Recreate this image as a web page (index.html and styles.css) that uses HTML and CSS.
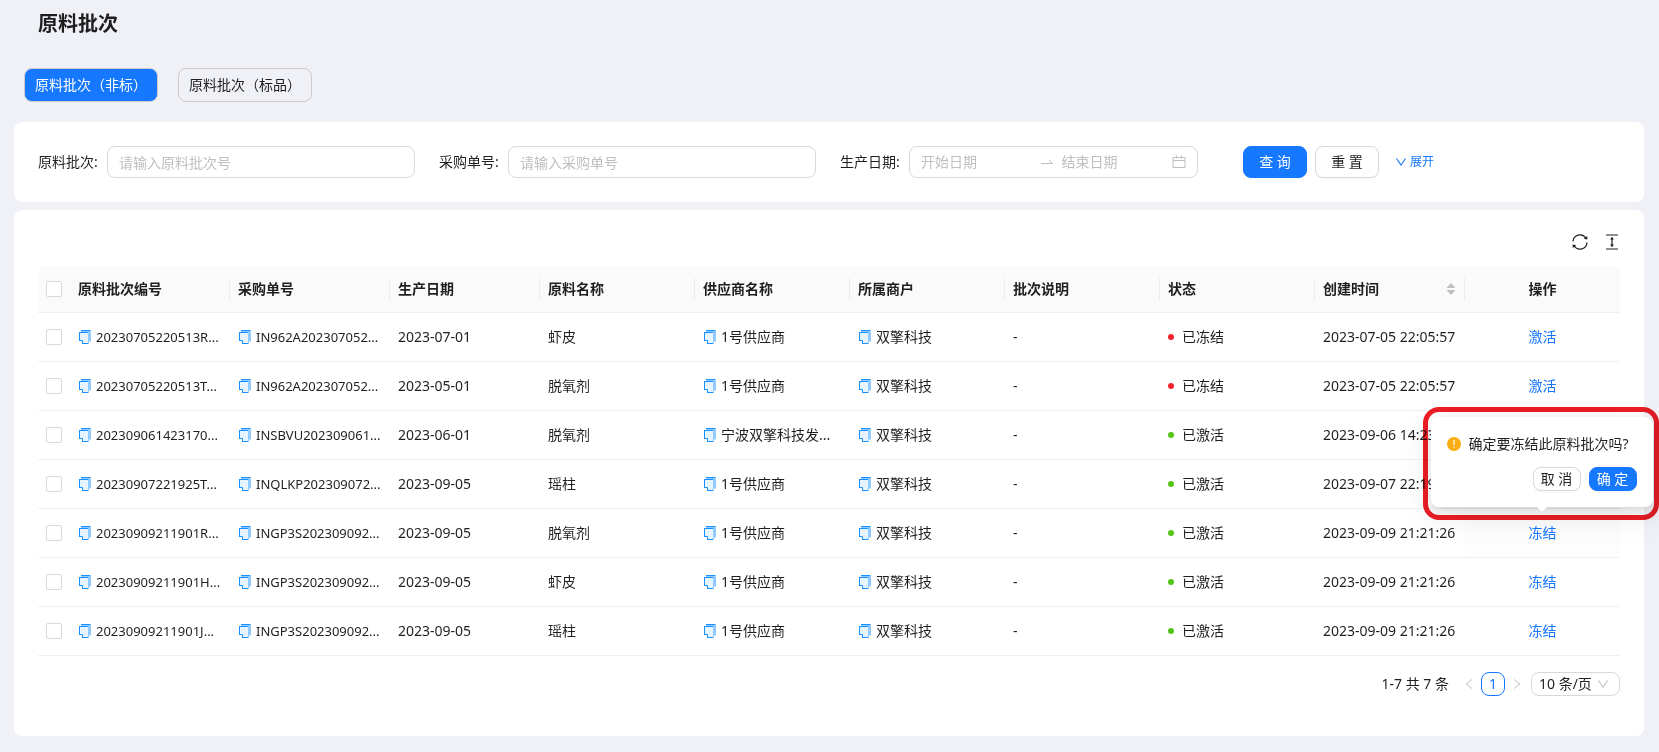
FILE: index.html
```html
<!DOCTYPE html>
<html lang="zh-CN">
<head>
<meta charset="utf-8">
<title>原料批次</title>
<link rel="stylesheet" href="styles.css">
</head>
<body>
<svg class="sprite" aria-hidden="true">
  <symbol id="copy" viewBox="0 0 12 14">
    <path fill="#91caff" d="M2 0h10v11.500h-2V13H8V3H2z"/>
    <path fill="#e6f4ff" d="M1 3h8v10H4L1 10z"/>
    <path fill="#91caff" d="M9 2h1v11H9z"/>
    <path fill="none" stroke="#1890ff" d="M2 .5h9M0 2.500h9M.5 2v9M1 10.500h2.500V13M3 13.500h6.500"/>
  </symbol>
  <symbol id="down" viewBox="0 0 12 12"><path fill="none" stroke="currentColor" stroke-width="1.100" d="M1.500 2.500 6 9l4.500-6.500"/></symbol>
</svg>
<main class="page">
  <h1 class="title">原料批次</h1>
  <nav class="tabs">
    <button class="tab tab-active" type="button">原料批次（非标）</button>
    <button class="tab" type="button">原料批次（标品）</button>
  </nav>

  <form class="card search">
    <div class="field">
      <label for="batch">原料批次:</label>
      <input class="control" id="batch" type="text" placeholder="请输入原料批次号">
    </div>
    <div class="field">
      <label for="order">采购单号:</label>
      <input class="control" id="order" type="text" placeholder="请输入采购单号">
    </div>
    <div class="field field-range">
      <label for="start">生产日期:</label>
      <div class="control range">
        <input id="start" type="text" placeholder="开始日期">
        <svg class="swap" viewBox="0 0 14 14" width="14" height="14"><path fill="none" stroke="currentColor" d="M1 8.500h11.500L9 5"/></svg>
        <input type="text" placeholder="结束日期" aria-label="结束日期">
        <svg viewBox="0 0 14 14" width="14" height="14"><path fill="none" stroke="currentColor" d="M1 2.500h12v10H1zM1 5.500h12M4.500.500v3M9.500.500v3"/></svg>
      </div>
    </div>
    <div class="actions">
      <button class="btn btn-primary" type="button">查 询</button>
      <button class="btn" type="button">重 置</button>
      <a class="expand" href="#"><svg width="12" height="12"><use href="#down"/></svg>展开</a>
    </div>
  </form>

  <section class="card list">
    <div class="toolbar">
      <button class="tool" type="button" aria-label="刷新">
        <svg viewBox="0 0 16 16" width="16" height="16"><path fill="none" stroke="currentColor" stroke-width="1.200" d="M1 7.500A7 7 0 0 1 13.800 4M15 8.500A7 7 0 0 1 2.200 12"/><path fill="currentColor" d="M15.300 2v3.600l-3.500-.9zM.7 14v-3.600l3.500.9z"/></svg>
      </button>
      <button class="tool" type="button" aria-label="密度">
        <svg viewBox="0 0 16 16" width="16" height="16"><path fill="none" stroke="currentColor" stroke-width="1.200" d="M2 1h12M2 15h12M8 4v8"/><path fill="currentColor" d="M8 2.800 9.800 5.500H6.200zM8 13.200 9.800 10.500H6.200z"/></svg>
      </button>
    </div>
    <table class="table">
      <colgroup>
        <col class="c-check"><col class="c-code"><col class="c-code"><col class="c-date"><col><col><col><col><col><col class="c-date"><col>
      </colgroup>
      <thead>
        <tr>
          <th><input type="checkbox" aria-label="全选"></th>
          <th><span class="head">原料批次编号</span></th>
          <th><span class="head">采购单号</span></th>
          <th><span class="head">生产日期</span></th>
          <th><span class="head">原料名称</span></th>
          <th><span class="head">供应商名称</span></th>
          <th><span class="head">所属商户</span></th>
          <th><span class="head">批次说明</span></th>
          <th><span class="head">状态</span></th>
          <th><span class="head">创建时间<svg viewBox="0 0 10 14" width="10" height="14"><path fill="#bfbfbf" d="M5 1l4.500 5h-9zM5 13l4.500-5h-9z"/></svg></span></th>
          <th class="op">操作</th>
        </tr>
      </thead>
      <tbody>
        <tr>
          <td><input type="checkbox" aria-label="选择"></td>
          <td><span class="copy code"><svg><use href="#copy"/></svg>20230705220513R...</span></td>
          <td><span class="copy code"><svg><use href="#copy"/></svg>IN962A202307052...</span></td>
          <td>2023-07-01</td><td>虾皮</td>
          <td><span class="copy"><svg><use href="#copy"/></svg>1号供应商</span></td>
          <td><span class="copy"><svg><use href="#copy"/></svg>双擎科技</span></td>
          <td>-</td><td><span class="status frozen">已冻结</span></td>
          <td>2023-07-05 22:05:57</td><td class="op"><a href="#">激活</a></td>
        </tr>
        <tr>
          <td><input type="checkbox" aria-label="选择"></td>
          <td><span class="copy code"><svg><use href="#copy"/></svg>20230705220513T...</span></td>
          <td><span class="copy code"><svg><use href="#copy"/></svg>IN962A202307052...</span></td>
          <td>2023-05-01</td><td>脱氧剂</td>
          <td><span class="copy"><svg><use href="#copy"/></svg>1号供应商</span></td>
          <td><span class="copy"><svg><use href="#copy"/></svg>双擎科技</span></td>
          <td>-</td><td><span class="status frozen">已冻结</span></td>
          <td>2023-07-05 22:05:57</td><td class="op"><a href="#">激活</a></td>
        </tr>
        <tr>
          <td><input type="checkbox" aria-label="选择"></td>
          <td><span class="copy code"><svg><use href="#copy"/></svg>202309061423170...</span></td>
          <td><span class="copy code"><svg><use href="#copy"/></svg>INSBVU202309061...</span></td>
          <td>2023-06-01</td><td>脱氧剂</td>
          <td><span class="copy"><svg><use href="#copy"/></svg>宁波双擎科技发...</span></td>
          <td><span class="copy"><svg><use href="#copy"/></svg>双擎科技</span></td>
          <td>-</td><td><span class="status">已激活</span></td>
          <td>2023-09-06 14:23</td><td class="op"></td>
        </tr>
        <tr>
          <td><input type="checkbox" aria-label="选择"></td>
          <td><span class="copy code"><svg><use href="#copy"/></svg>20230907221925T...</span></td>
          <td><span class="copy code"><svg><use href="#copy"/></svg>INQLKP202309072...</span></td>
          <td>2023-09-05</td><td>瑶柱</td>
          <td><span class="copy"><svg><use href="#copy"/></svg>1号供应商</span></td>
          <td><span class="copy"><svg><use href="#copy"/></svg>双擎科技</span></td>
          <td>-</td><td><span class="status">已激活</span></td>
          <td>2023-09-07 22:19</td><td class="op"></td>
        </tr>
        <tr>
          <td><input type="checkbox" aria-label="选择"></td>
          <td><span class="copy code"><svg><use href="#copy"/></svg>20230909211901R...</span></td>
          <td><span class="copy code"><svg><use href="#copy"/></svg>INGP3S202309092...</span></td>
          <td>2023-09-05</td><td>脱氧剂</td>
          <td><span class="copy"><svg><use href="#copy"/></svg>1号供应商</span></td>
          <td><span class="copy"><svg><use href="#copy"/></svg>双擎科技</span></td>
          <td>-</td><td><span class="status">已激活</span></td>
          <td>2023-09-09 21:21:26</td>
          <td class="op op-open"><a href="#">冻结</a>
            <div class="popconfirm" role="dialog" aria-label="确认">
              <p class="message"><svg viewBox="0 0 14 14" width="14" height="14"><circle cx="7" cy="7" r="7" fill="#faad14"/><path stroke="#fff" stroke-width="1.200" d="M7 3v5M7 9.500v1.300"/></svg>确定要冻结此原料批次吗?</p>
              <div class="choices">
                <button class="btn btn-small" type="button">取 消</button>
                <button class="btn btn-small btn-primary" type="button">确 定</button>
              </div>
            </div>
            <div class="marker"></div>
          </td>
        </tr>
        <tr>
          <td><input type="checkbox" aria-label="选择"></td>
          <td><span class="copy code"><svg><use href="#copy"/></svg>20230909211901H...</span></td>
          <td><span class="copy code"><svg><use href="#copy"/></svg>INGP3S202309092...</span></td>
          <td>2023-09-05</td><td>虾皮</td>
          <td><span class="copy"><svg><use href="#copy"/></svg>1号供应商</span></td>
          <td><span class="copy"><svg><use href="#copy"/></svg>双擎科技</span></td>
          <td>-</td><td><span class="status">已激活</span></td>
          <td>2023-09-09 21:21:26</td><td class="op"><a href="#">冻结</a></td>
        </tr>
        <tr>
          <td><input type="checkbox" aria-label="选择"></td>
          <td><span class="copy code"><svg><use href="#copy"/></svg>20230909211901J...</span></td>
          <td><span class="copy code"><svg><use href="#copy"/></svg>INGP3S202309092...</span></td>
          <td>2023-09-05</td><td>瑶柱</td>
          <td><span class="copy"><svg><use href="#copy"/></svg>1号供应商</span></td>
          <td><span class="copy"><svg><use href="#copy"/></svg>双擎科技</span></td>
          <td>-</td><td><span class="status">已激活</span></td>
          <td>2023-09-09 21:21:26</td><td class="op"><a href="#">冻结</a></td>
        </tr>
      </tbody>
    </table>
    <footer class="pager">
      <span class="total">1-7 共 7 条</span>
      <button class="step" type="button" aria-label="上一页"><svg viewBox="0 0 8 12" width="8" height="12"><path fill="none" stroke="currentColor" d="M7 1.500 1 6l6 4.500"/></svg></button>
      <button class="step current" type="button">1</button>
      <button class="step" type="button" aria-label="下一页"><svg viewBox="0 0 8 12" width="8" height="12"><path fill="none" stroke="currentColor" d="M1 1.500 7 6l-6 4.500"/></svg></button>
      <span class="size">
        <select aria-label="每页条数"><option>10 条/页</option></select>
        <svg width="12" height="12"><use href="#down"/></svg>
      </span>
    </footer>
  </section>
</main>
</body>
</html>
```
FILE: styles.css
```css
* { box-sizing: border-box; }
body {
  margin: 0;
  background: #f0f1f6;
  color: rgba(0, 0, 0, .88);
  font: 14px/22px "Noto Sans", "Noto Sans CJK SC", sans-serif;
}
button, input, select { font: inherit; color: inherit; }
a { color: #1677ff; text-decoration: none; }
.sprite { display: none; }
.page { padding: 9px 15px 16px 14px; }

.title { margin: 0 24px; font-size: 20px; line-height: 30px; font-weight: 700; }
.tabs { display: flex; gap: 20px; margin: 29px 10px 20px; }
.tab {
  height: 34px;
  width: 134px;
  padding: 0 10px;
  border: 1px solid #ccc;
  border-radius: 8px;
  background: transparent;
  text-align: left;
  white-space: nowrap;
}
.tab-active { background: #1677ff; color: #fff; }

.card { background: #fff; border-radius: 8px; }
.search { display: flex; padding: 24px; margin-bottom: 8px; }
.field {
  display: flex;
  align-items: center;
  gap: 8px;
  flex: 0 1 377px;
  min-width: 0;
  margin-right: 24px;
}
.field label { flex: none; width: 61px; white-space: nowrap; }
.field-range { flex-basis: 358px; margin-right: 45px; }
.control {
  flex: 1;
  min-width: 0;
  height: 32px;
  padding: 0 11px;
  border: 1px solid #d9d9d9;
  border-radius: 8px;
  background: #fff;
  outline: none;
}
::placeholder { color: #bfbfbf; opacity: 1; }
.range { display: flex; align-items: center; color: #bfbfbf; }
.range input { flex: 1; min-width: 0; padding: 0; border: 0; outline: none; }
.range svg { flex: none; }
.range .swap { margin: 0 8px; }
.actions { display: flex; flex: none; align-items: center; gap: 8px; }
.btn {
  height: 32px;
  width: 64px;
  padding: 0;
  border: 1px solid #d9d9d9;
  border-radius: 8px;
  background: #fff;
  box-shadow: 0 2px 0 rgba(0, 0, 0, .02);
  white-space: nowrap;
}
.btn-primary { border-color: #1677ff; background: #1677ff; color: #fff; }
.btn-small { height: 24px; width: 48px; line-height: 20px; }
.expand { display: flex; align-items: center; gap: 3px; margin-left: 8px; font-size: 12px; }

.list { padding: 16px 24px 40px; }
.toolbar { display: flex; justify-content: flex-end; gap: 16px; height: 32px; margin-bottom: 8px; }
.tool { display: flex; align-items: center; padding: 0; border: 0; background: none; }

.table { width: 100%; table-layout: fixed; border-collapse: separate; border-spacing: 0; }
.c-check { width: 32px; }
.c-code { width: 160px; }
.c-date { width: 150px; }
.table th, .table td { padding: 0 8px; border-bottom: 1px solid #f0f0f0; text-align: left; white-space: nowrap; }
.table th { height: 47px; background: #fafafa; font-weight: 600; }
.table th:first-child { border-top-left-radius: 8px; }
.table th:last-child { border-top-right-radius: 8px; }
.table td { height: 49px; }
.table .head {
  display: flex;
  align-items: center;
  justify-content: space-between;
  margin-right: -8px;
  padding-right: 8px;
  border-right: 1px solid #ebebeb;
}
.table input {
  display: block;
  appearance: none;
  width: 16px;
  height: 16px;
  margin: 0;
  border: 1px solid #d9d9d9;
  border-radius: 2px;
  background: #fff;
}
.table .op { position: relative; text-align: center; }
.table .op-open { background: #fdfdfd; }
.copy { display: flex; align-items: center; gap: 5px; }
.copy svg { flex: none; width: 12px; height: 14px; margin-left: 1px; }
.code { font-size: 13px; }
.status { display: flex; align-items: center; gap: 8px; }
.status::before { content: ""; width: 6px; height: 6px; border-radius: 50%; background: #52c41a; }
.frozen::before { background: #f5222d; }

.popconfirm {
  position: absolute;
  z-index: 1;
  bottom: calc(100% + 2px);
  left: 50%;
  width: 222px;
  padding: 16px;
  margin-left: -112px;
  border-radius: 8px;
  background: #fff;
  box-shadow: 0 6px 16px rgba(0, 0, 0, .08), 0 3px 6px -4px rgba(0, 0, 0, .12), 0 9px 28px 8px rgba(0, 0, 0, .05);
}
.popconfirm::after {
  content: "";
  position: absolute;
  top: 100%;
  left: 50%;
  margin-left: -5px;
  border: 5px solid transparent;
  border-top-color: #fff;
}
.message { display: flex; align-items: center; gap: 8px; margin: 0 0 12px; }
.choices { display: flex; justify-content: flex-end; gap: 8px; }
.marker {
  position: absolute;
  z-index: 2;
  bottom: calc(100% - 11px);
  left: -42px;
  right: -39px;
  height: 113px;
  border: 5px solid #ed1c24;
  border-radius: 16px;
  mix-blend-mode: multiply;
  pointer-events: none;
}

.pager { display: flex; align-items: center; justify-content: flex-end; margin-top: 16px; }
.total { margin-right: 8px; }
.step {
  display: flex;
  align-items: center;
  justify-content: center;
  width: 24px;
  height: 24px;
  padding: 0;
  border: 1px solid transparent;
  border-radius: 8px;
  background: none;
  color: #bfbfbf;
}
.current { border-color: #1677ff; color: #1677ff; }
.size {
  display: grid;
  align-items: center;
  margin-left: 2px;
  width: 89px;
  height: 24px;
  border: 1px solid #d9d9d9;
  border-radius: 8px;
}
.size select, .size svg { grid-area: 1 / 1; }
.size select { appearance: none; width: 100%; padding: 0 7px; border: 0; background: none; line-height: 20px; outline: none; }
.size svg { justify-self: end; margin-right: 10px; color: #bfbfbf; pointer-events: none; }
```
